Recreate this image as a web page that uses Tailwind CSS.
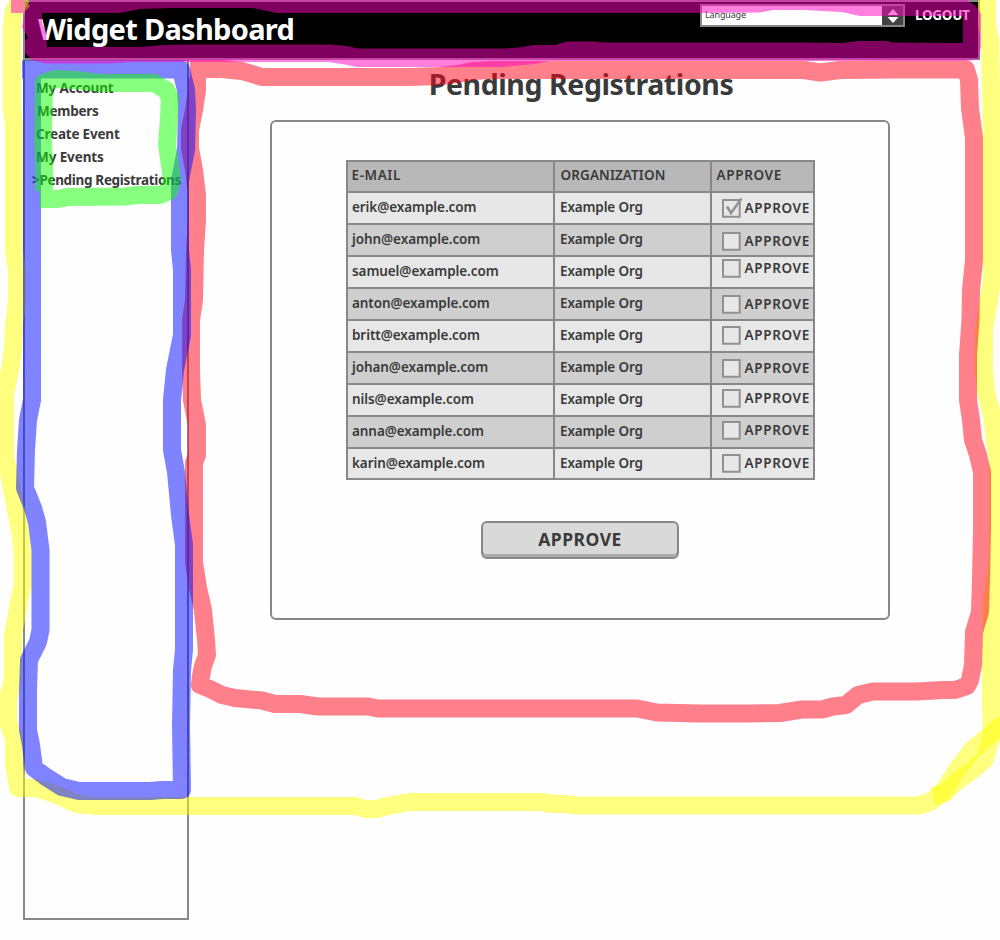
<!DOCTYPE html>
<html lang="en">
<head>
<meta charset="utf-8">
<title>Widget Dashboard</title>
<script src="https://cdn.jsdelivr.net/npm/@tailwindcss/browser@4"></script>
</head>
<body class="relative h-[940px] w-[1000px] overflow-hidden bg-[#fefefe] font-['Noto_Sans',sans-serif] text-[#3a3a3a]">
<header class="ml-[23px] flex h-[60px] w-[957px] items-start justify-between border-2 border-[#888] bg-black text-white">
  <h1 class="pt-[7px] pl-[13px] text-[29px] leading-[40px] font-bold tracking-[-0.7px]">Widget Dashboard</h1>
  <div class="flex pt-[2px] pr-2">
    <div class="flex h-[23px] w-[205px] border-2 border-[#888] bg-[#fefefe]">
      <span class="flex-1 pl-[3px] text-[9px] leading-[17px] tracking-[-0.15px] text-[#3a3a3a]">Language</span>
      <span class="flex w-[21px] items-center justify-center bg-[#444]">
        <svg class="h-[14px] w-3" viewBox="0 0 12 14" fill="#fefefe"><path d="M6 0L11.5 6H.5zM6 14L11.5 8H.5z"/></svg>
      </span>
    </div>
    <a class="ml-[10px] w-[55px] text-[13.5px] leading-[22px] font-bold tracking-[-0.3px] whitespace-nowrap">LOGOUT</a>
  </div>
</header>
<div class="flex">
  <nav class="-mt-px ml-[23px] flex h-[861px] w-[166px] flex-col border-2 border-[#888] pt-[16px] pl-[11px] text-[13.5px] leading-[23px] font-bold whitespace-nowrap">
    <a class="tracking-[-0.15px]">My Account</a>
    <a class="pl-px tracking-[-0.25px]">Members</a>
    <a class="tracking-[-0.2px]">Create Event</a>
    <a class="tracking-[-0.1px]">My Events</a>
    <a class="-ml-1 tracking-[-0.33px]">&gt;Pending Registrations</a>
  </nav>
  <main class="ml-[81px] w-[620px]">
    <h2 class="h-[60px] pt-[4px] pl-[2px] text-center text-[28.5px] leading-[40px] font-bold tracking-[-0.42px]">Pending Registrations</h2>
    <section class="flex h-[500px] flex-col items-center rounded-md border-2 border-[#888] pt-[38px]">
      <div id="table" class="grid w-[469px] grid-cols-[205px_155px_101px] gap-[2px] bg-[#888] p-[2px] text-[13.5px] font-semibold whitespace-nowrap">
        <div class="h-[29px] bg-[#b8b8b8] pl-1 leading-[26px] tracking-[0.6px]">E-MAIL</div>
        <div class="h-[29px] bg-[#b8b8b8] pl-[6px] leading-[26px] tracking-[0.1px]">ORGANIZATION</div>
        <div class="h-[29px] bg-[#b8b8b8] pl-[5px] leading-[26px] tracking-[0.65px]">APPROVE</div>
      </div>
      <button class="mt-[41px] h-[38px] w-[198px] rounded-md border-2 border-[#888] bg-[#d9d9d9] pb-[2px] text-[17.5px] leading-[32px] font-bold tracking-[0.5px] shadow-[inset_0_-3px_0_#aaa]">APPROVE</button>
    </section>
  </main>
</div>

<!-- Highlighter strokes marking the page regions -->
<svg class="pointer-events-none absolute inset-0 h-[940px] w-[1000px]" viewBox="0 0 1000 940" fill="none" stroke-width="18" stroke-linejoin="round">
  <g stroke="#ff0" stroke-opacity=".5">
    <path d="M22 -3L14 10L12 25V110L14 125V250L17 272V300L14 325L13 350L10 370L5 395V458L9 472L12 490L16 510L21 535L22.500 555V585L19 603L13 635V678L8 700V722L14 738V765L18 788H35L55 794L77 804L97 806H355L365 809H377L386 806.500L409 802H541L553 804H565L577 805.500H918L930 802L942 793L957 770L972 750L1004 723"/>
    <path d="M987 -9V25L990 40L992 135V225L992 280L988 305L984 330V370L986 392L992 415L995 440L998 460V520L998 560L992 600L991 650V700L992 735L985 759L975 768L956 782L945 793L933 796"/>
  </g>
  <path stroke="#ff0018" stroke-opacity=".5" d="M190 69L222 69L242 71L262 77H410L440 76L458 74L472 71L490 70H804L820 72.500L840 70L897 69.500H966L969 80L970 108L974 138V260L971 290L970.500 320L968 355V400L971 420L973 440L978 455L982 472V530L981 580L980 612L974 632L973 665L970 680L967 686L955 690H943L917 691.500H873L858 695L846 705L833 706.500L822 709.500H802L780 713L750 713.500H700L657 712.500L637 708.500H378L368 706.500H318L300 704H275L262 700.500L235 698L222 695L210 689L200 685L201 676L203 666L207 655L206 640L203 610L198 588L194 562V463L197 455V425L192 400L191 370V320L194 300L195 250L197 220L197 195L194 170L190 148V130L194 110L197 90V78"/>
  <path stroke="#0008ff" stroke-opacity=".5" d="M22 69.500H181L186 90L187 110L186 150L180 180L180 250L182 270V335L175 370L172 400V450L176 472L180 515L184 545V590L184 650L182 670L181 725L182 790H162L150 791H79L62 787L46 777L34 768L31 745L28 730V690L29 660L38 642L40.500 630V550L37 522L33 508L25 488L26 450L28 420L32 400V350L32 150L32 78"/>
  <path stroke="#10ff00" stroke-opacity=".5" d="M40 199H58L68 197L125 196.500L137 195H160L169 191L172 180L169 158L167 145L169 118L170 98L166 90L154 83H100L75 80L55 79L44 83L43 140L44 165L44 191"/>
  <path fill="#ff00c0" fill-opacity=".5" fill-rule="evenodd" d="M30 0H967L976 6L981 14V46L979 59L967 61H568L550 61L535 64L503 67H357L342 64L328 62H133L110 63.500H45L32 60L25 53V40L28 38L22 27L23 22L25 13ZM42 13H120L140 9L173 8H253L277 13H700L760 12.500L773 10H803L842 12L860 16H963V43L890 42.500V41H857L842 43L805 42.500H602L595 41.500H567L555 45H533L523 47L505 48.500H358L347 46L330 44.500H190L165 45L140 47H47L46 32L42 23Z"/>
  <path fill="#ff80a0" d="M11 0H24V13H11Z"/>
  <path fill="#ff8070" fill-opacity=".6" d="M24 0L30 6L24 13Z"/>
</svg>
<script>
const table = document.getElementById('table');
const rows = [['erik', 6], ['john', 7], ['samuel', 2], ['anton', 6], ['britt', 5], ['johan', 6], ['nils', 4], ['anna', 4], ['karin', 5]];
rows.forEach(([name, top], i) => {
  const tone = (i % 2 ? 'bg-[#cfcfcf]' : 'bg-[#e7e7e7]') + (i === 8 ? ' h-[29px]' : ' h-[30px]');
  const tick = i === 0 ? '<path d="M5 7.500L9 14L19.500 -.5" stroke-width="2.500"/>' : '';
  table.insertAdjacentHTML('beforeend', `
    <div class="${tone} pl-[4.5px] leading-[28px] tracking-[-0.08px]">${name}@example.com</div>
    <div class="${tone} pl-[5.5px] leading-[28px] tracking-[-0.15px]">Example Org</div>
    <div class="${tone} flex items-start pl-[10px]" style="padding-top:${top}px">
      <svg class="h-[19px] w-[19px] shrink-0 overflow-visible" viewBox="0 0 19 19" fill="none" stroke="#919191" stroke-width="2"><path d="M1 1H17.700V17.700H1Z" fill="#e7e7e7"/>${tick}</svg>
      <span class="ml-[4px] leading-[18px] tracking-[0.65px]">APPROVE</span>
    </div>`);
});
</script>
</body>
</html>
